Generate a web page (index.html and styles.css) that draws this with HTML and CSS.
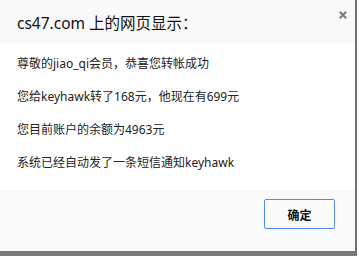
FILE: index.html
```html
<!DOCTYPE html>
<html lang="zh-CN">
<head>
<meta charset="utf-8">
<title>cs47.com</title>
<link rel="stylesheet" href="styles.css">
</head>
<body>
<div class="dialog">
  <div class="header">
    <span class="title">cs47.com 上的网页显示：</span>
    <span class="close">
      <svg width="8" height="8" viewBox="0 0 8 8"><path d="M0.8 0.8 L7.2 7.2 M7.2 0.8 L0.8 7.2" stroke="#7a7a7a" stroke-width="2" fill="none"/></svg>
    </span>
  </div>
  <div class="body">
    <p class="line">尊敬的jiao_qi会员，恭喜您转帐成功</p>
    <p class="line">您给keyhawk转了168元，他现在有699元</p>
    <p class="line">您目前账户的余额为4963元</p>
    <p class="line">系统已经自动发了一条短信通知keyhawk</p>
  </div>
  <div class="footer">
    <button class="ok">确定</button>
  </div>
</div>
</body>
</html>
```
FILE: styles.css
```css
html, body {
  margin: 0;
  padding: 0;
  background: #ffffff;
}
body {
  font-family: "Noto Sans", "Noto Sans CJK SC", sans-serif;
  width: 359px;
  height: 256px;
  overflow: hidden;
}
.dialog {
  width: 355px;
  height: 251px;
  border-right: 2px solid #707070;
  border-bottom: 5px solid #7a7a7a;
  display: flex;
  flex-direction: column;
  background: #ffffff;
}
.header {
  height: 43px;
  background: #f9f9f9;
  display: flex;
  align-items: center;
  justify-content: space-between;
  padding: 0 8px 0 17px;
  box-sizing: border-box;
}
.title {
  font-size: 15.5px;
  color: #111;
  margin-top: 1px;
}
.close {
  align-self: flex-start;
  margin-top: 11px;
  display: flex;
}
.body {
  height: 146px;
  padding: 13px 17px 0;
  box-sizing: border-box;
  display: flex;
  flex-direction: column;
  gap: 17px;
}
.line {
  margin: 0;
  font-size: 12px;
  line-height: 16px;
  color: #222;
  white-space: nowrap;
}
.footer {
  flex: 1;
  background: #fafafa;
  display: flex;
  justify-content: flex-end;
  align-items: flex-start;
  padding: 10px 20px 0 0;
}
.ok {
  width: 71px;
  height: 30px;
  border: 1px solid #4d8af0;
  border-radius: 2px;
  background: #fbfbfb;
  font-family: "Noto Sans CJK SC", sans-serif;
  font-size: 12px;
  font-weight: bold;
  color: #111;
  padding: 0;
}
```
